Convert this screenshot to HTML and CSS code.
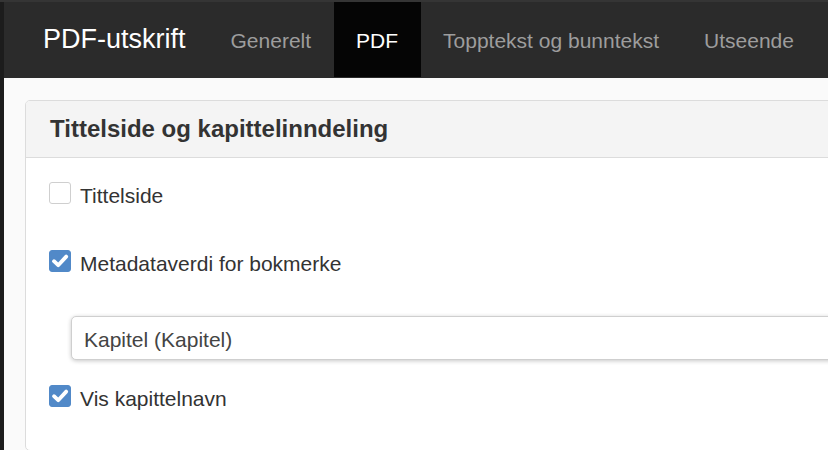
FILE: index.html
```html
<!DOCTYPE html>
<html lang="no">
<head>
<meta charset="utf-8">
<title>PDF-utskrift</title>
<link rel="stylesheet" href="styles.css">
</head>
<body>
<div class="app">
  <nav class="navbar">
    <span class="brand">PDF-utskrift</span>
    <a class="nav-link">Generelt</a>
    <a class="nav-link active">PDF</a>
    <a class="nav-link">Topptekst og bunntekst</a>
    <a class="nav-link">Utseende</a>
  </nav>
  <main class="content">
    <section class="panel">
      <header class="panel-heading">Tittelside og kapittelinndeling</header>
      <div class="panel-body">
        <label class="check-row first">
          <span class="box"></span>
          <span class="label-text">Tittelside</span>
        </label>
        <label class="check-row second">
          <span class="box checked"><svg viewBox="0 0 22 22" width="22" height="22"><path d="M5 11.2 L9.2 15.2 L17.2 6.6" fill="none" stroke="#fff" stroke-width="3.8" stroke-linejoin="round" stroke-linecap="round"/></svg></span>
          <span class="label-text">Metadataverdi for bokmerke</span>
        </label>
        <div class="select" role="combobox">Kapitel (Kapitel)</div>
        <label class="check-row third">
          <span class="box checked"><svg viewBox="0 0 22 22" width="22" height="22"><path d="M5 11.2 L9.2 15.2 L17.2 6.6" fill="none" stroke="#fff" stroke-width="3.8" stroke-linejoin="round" stroke-linecap="round"/></svg></span>
          <span class="label-text">Vis kapittelnavn</span>
        </label>
      </div>
    </section>
  </main>
</div>
</body>
</html>
```
FILE: styles.css
```css
html, body {
  margin: 0;
  padding: 0;
  height: 100%;
}
body {
  background: #1c1c1c;
  border-top: 2px solid #353535;
  box-sizing: border-box;
  overflow: hidden;
  font-family: "Liberation Sans", Arial, sans-serif;
  color: #333;
}
.app {
  margin-left: 4px;
  height: 100%;
  background: #fafafa;
  display: flex;
  flex-direction: column;
}
.navbar {
  display: flex;
  height: 76px;
  background: #2b2b2b;
  flex-shrink: 0;
}
.brand {
  font-size: 27px;
  line-height: 75px;
  height: 75px;
  color: #fff;
  padding: 0 22.5px 0 39px;
}
.nav-link {
  font-size: 21px;
  line-height: 77px;
  height: 75px;
  overflow: hidden;
  padding: 0 22.5px;
  color: #9d9d9d;
  white-space: nowrap;
}
.nav-link.active {
  background: #050505;
  color: #fff;
}
.content {
  flex: 1;
  padding: 22px 0 0 21px;
}
.panel {
  margin-right: -30px;
  background: #fff;
  border: 1px solid #dcdcdc;
  border-radius: 5px;
  overflow: hidden;
  height: 349px;
}
.panel-heading {
  background: #f4f4f4;
  border-bottom: 1px solid #dcdcdc;
  height: 56px;
  line-height: 56px;
  padding-left: 24px;
  font-size: 24px;
  font-weight: bold;
  color: #333;
}
.panel-body {
  padding: 24px 0 0 23px;
}
.check-row {
  display: flex;
  align-items: flex-start;
  font-size: 21px;
  line-height: 26px;
}
.check-row.second {
  margin-top: 41px;
}
.check-row.third {
  margin-top: 25px;
}
.box {
  width: 22px;
  height: 22px;
  box-sizing: border-box;
  border: 1px solid #cfcfcf;
  border-radius: 3px;
  background: #fff;
  margin-right: 9px;
  flex-shrink: 0;
  display: flex;
}
.box.checked {
  background: #5189c8;
  border-color: #5189c8;
}
.box svg {
  margin: -1px;
}
.label-text {
  color: #333;
  padding-top: 1px;
}
.select {
  margin: 39px -10px 0 22px;
  height: 44px;
  box-sizing: border-box;
  border: 1px solid #cfcfcf;
  border-radius: 5px;
  box-shadow: 0 1px 4px rgba(0, 0, 0, 0.22);
  font-size: 21px;
  line-height: 44px;
  padding: 1px 0 0 12px;
  color: #444;
  background: #fff;
}
```
